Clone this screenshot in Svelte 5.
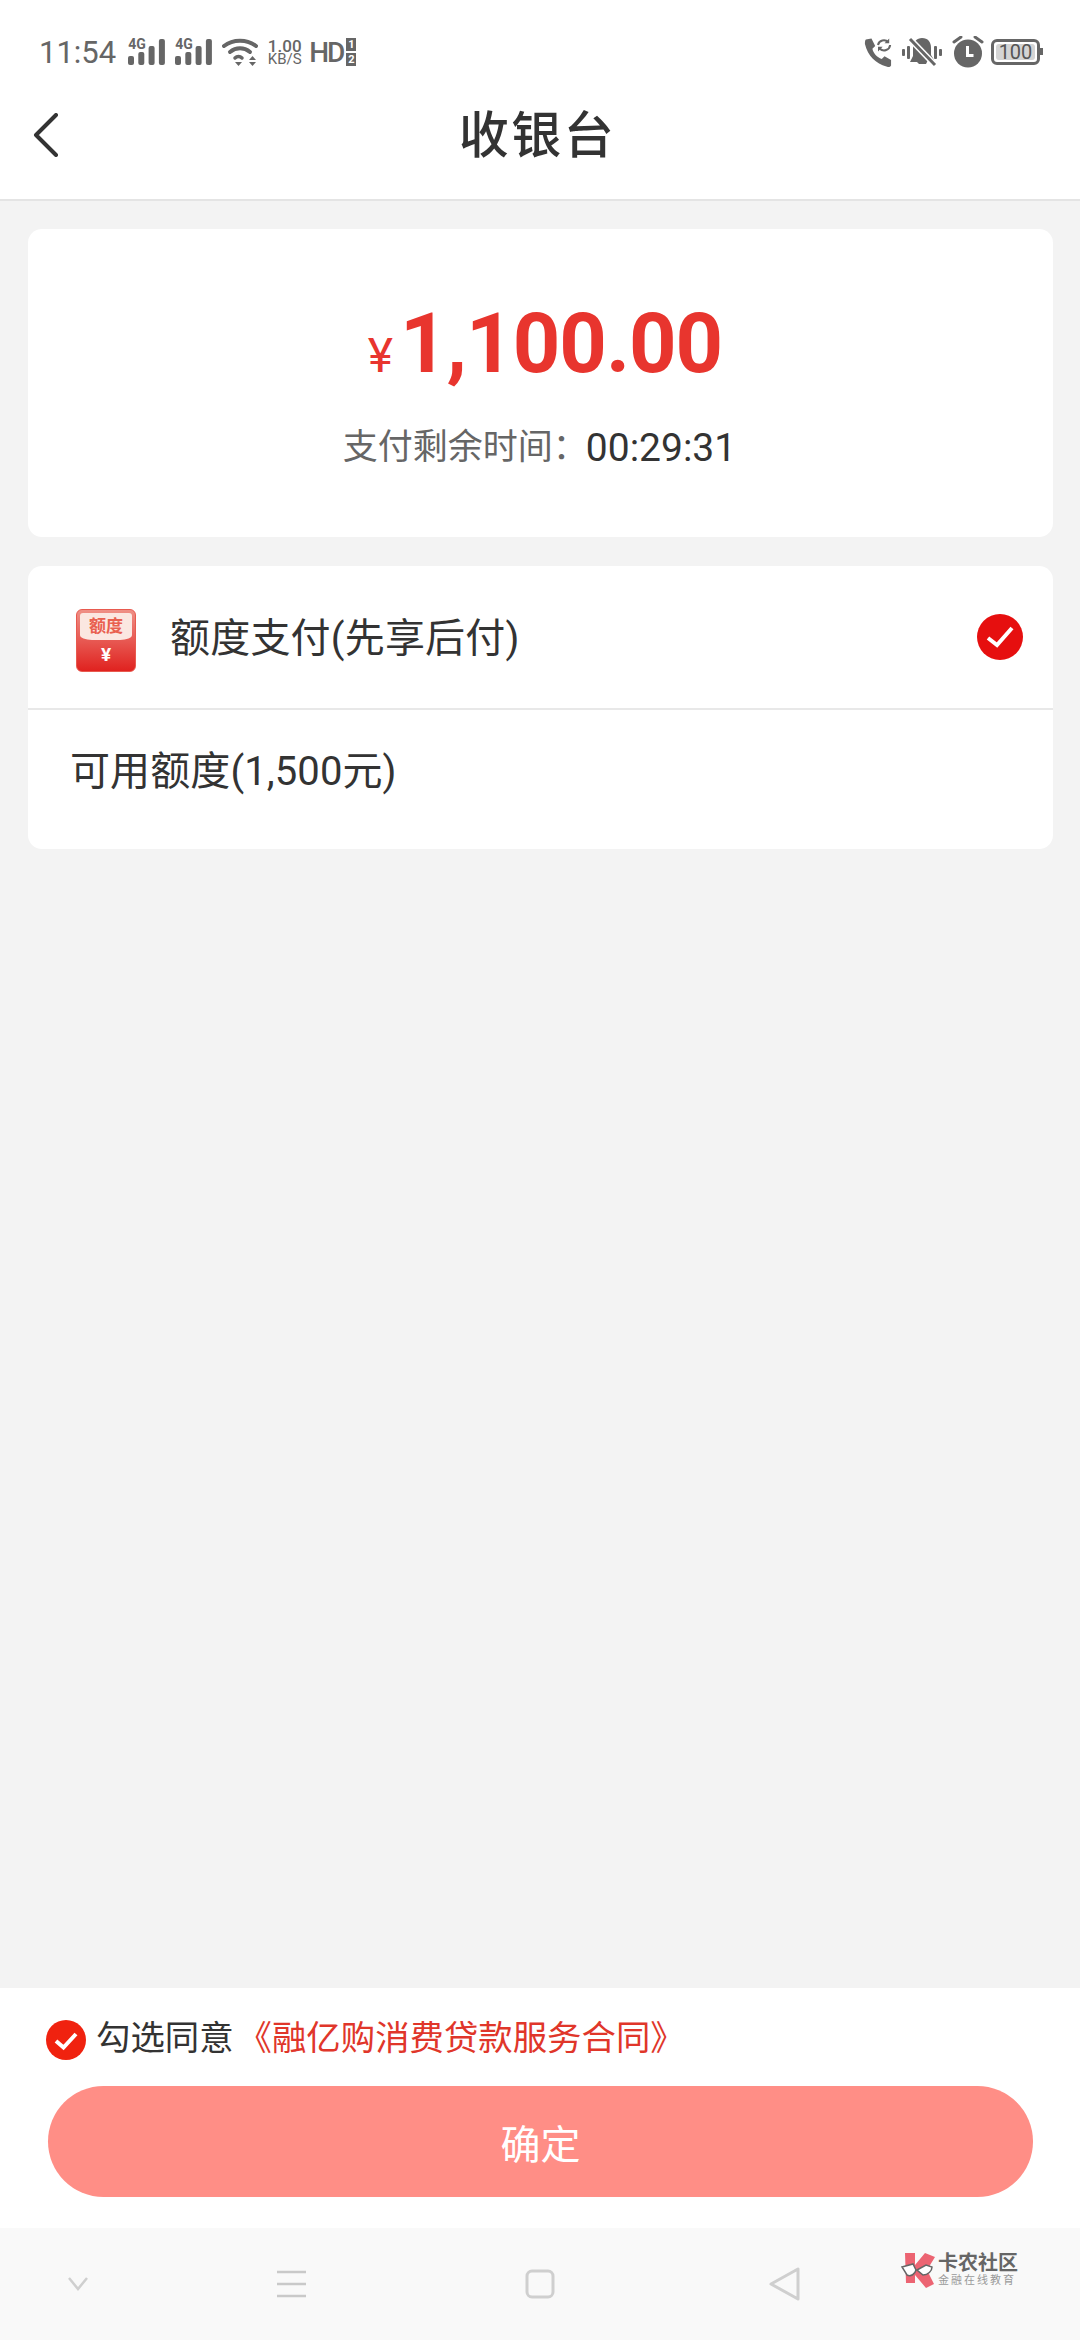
<script>
	const bars = [9, 13, 19, 26];
</script>

<div class="page">
	<div class="status">
		<div class="status-left">
			<span class="time">11:54</span>
			{#each [0, 1] as sim}
				<span class="signal" data-sim={sim}>
					<span class="net">4G</span>
					<svg width="37" height="26" viewBox="0 0 37 26" fill="#666">
						{#each bars as h, i}
							<rect x={i * 10.3} y={26 - h} width="6" height={h} rx="2" />
						{/each}
					</svg>
				</span>
			{/each}
			<svg class="wifi" width="36" height="29" viewBox="0 0 36 29" fill="none" stroke="#666">
				<path d="M2 8C11 1 25 1 34 8" stroke-width="4" stroke-linecap="round" />
				<path d="M8 14C14 9 22 9 28 14" stroke-width="4" stroke-linecap="round" />
				<path d="M13 20C15 18 18 18 20 20" stroke-width="3.5" stroke-linecap="round" />
				<path d="M13 24h7l-3.500 4z" fill="#666" stroke="none" />
				<path d="M27 22l3.500-4 3.500 4zM27 24h7l-3.500 4z" fill="#666" stroke="none" />
			</svg>
			<span class="speed"><b>1.00</b><i>KB/S</i></span>
			<span class="hd">HD</span>
			<span class="hd-sims"><b>1</b><b>2</b></span>
		</div>
		<div class="status-right">
			<svg width="28" height="30" viewBox="0 0 30 31" fill="#666">
				<path d="M2 2l6-1 4 8-3 3c1 5 5 9 10 11l3-3 7 4v6c-1 2-3 2-5 1C13 28 4 20 1 7c0-2 0-4 1-5z" />
				<path d="M15 8a6.500 6.500 0 0 1 11-3M28 8a6.500 6.500 0 0 1-11 4" fill="none" stroke="#666" stroke-width="2.200" />
				<path d="M27 1v5h-5zM15 15v-5h5z" />
			</svg>
			<svg width="40" height="30" viewBox="0 0 40 30" fill="#666">
				<path d="M20 1c6 0 9 4 9 10v7l3 5H26l-2 4h-7l-2-2H8l3-6v-8c0-6 4-10 9-10z" />
				<path d="M8 2l25 26" stroke="#fff" stroke-width="6" />
				<path d="M8 2l25 26" stroke="#666" stroke-width="3" />
				<rect x="0" y="12" width="3" height="7" rx="1" />
				<rect x="5" y="9" width="3" height="13" rx="1" />
				<rect x="32" y="9" width="3" height="13" rx="1" />
				<rect x="37" y="12" width="3" height="7" rx="1" />
			</svg>
			<svg width="32" height="32" viewBox="0 0 32 32">
				<circle cx="16" cy="17.500" r="14" fill="#666" />
				<path d="M15.500 10v9.500h6" fill="none" stroke="#fff" stroke-width="3" />
				<path d="M2 6l7-5M30 6l-7-5" stroke="#666" stroke-width="3" stroke-linecap="round" />
			</svg>
			<span class="battery"><span class="level">100</span></span>
		</div>
	</div>

	<header class="topbar">
		<svg class="back" width="26" height="44" viewBox="0 0 26 44" fill="none" stroke="#333" stroke-width="4" stroke-linecap="round" stroke-linejoin="round">
			<path d="M23 2L3 22l20 20" />
		</svg>
		<h1>收银台</h1>
	</header>

	<main class="content">
		<section class="card amount-card">
			<div class="amount"><span class="yen">¥</span><span class="num">1,100.00</span></div>
			<div class="remain"><span>支付剩余时间：</span><span class="clock">00:29:31</span></div>
		</section>

		<section class="card pay-card">
			<div class="pay-row">
				<div class="pay-icon">
					<span class="pay-top">额度</span>
					<span class="pay-yen">¥</span>
				</div>
				<span class="pay-label">额度支付(先享后付)</span>
				<svg class="pay-check" width="46" height="46" viewBox="0 0 46 46">
					<circle cx="23" cy="23" r="23" fill="#e60f0f" />
					<path d="M11 24l9 7 15-17" fill="none" stroke="#fff" stroke-width="4" />
				</svg>
			</div>
			<div class="limit-row">可用额度(1,500元)</div>
		</section>
	</main>

	<footer class="bottom">
		<div class="agree">
			<svg class="agree-check" width="40" height="40" viewBox="0 0 40 40">
				<circle cx="20" cy="20" r="20" fill="#f0220f" />
				<path d="M10 21l7.500 6.500L30 14" fill="none" stroke="#fff" stroke-width="4" />
			</svg>
			<span class="agree-text">勾选同意</span>
			<span class="contract">《融亿购消费贷款服务合同》</span>
		</div>
		<button class="confirm">确定</button>
	</footer>

	<nav class="navbar">
		<svg class="nav-down" width="20" height="14" viewBox="0 0 20 14" fill="none" stroke="#cfcfcf" stroke-width="2.500"><path d="M1 1l9 11 9-11" /></svg>
		<svg class="nav-menu" width="31" height="28" viewBox="0 0 31 28" fill="none" stroke="#c9c9c9" stroke-width="2.500"><path d="M1 2h29M1 14h29M1 26h29" /></svg>
		<svg class="nav-home" width="30" height="30" viewBox="0 0 30 30" fill="none" stroke="#cfcfcf" stroke-width="3"><rect x="2" y="2" width="26" height="26" rx="5" /></svg>
		<svg class="nav-back" width="32" height="34" viewBox="0 0 32 34" fill="none" stroke="#cfcfcf" stroke-width="3" stroke-linejoin="round"><path d="M29 2v30L2 17z" /></svg>
		<div class="watermark">
			<svg width="36" height="36" viewBox="0 0 34 36">
				<path d="M4 1h10v12L24 1l10 4-8 13 7 14-8 4-11-13v8H5z" fill="#ec6472" />
				<path d="M1 15l11-3 3 6c-1 4-5 7-9 5zM16 18l9-5 6 2c0 4-4 8-9 8z" fill="#fff" stroke="#666" stroke-width="1.500" />
			</svg>
			<div class="wm-text">
				<span class="wm-name">卡农社区</span>
				<span class="wm-sub">金融在线教育</span>
			</div>
		</div>
	</nav>
</div>

<style>
	:global(body) {
		margin: 0;
		background: #f3f3f3;
	}

	.page {
		width: 1080px;
		height: 2340px;
		display: flex;
		flex-direction: column;
		background: #f3f3f3;
		font-family: Roboto, "Noto Sans CJK SC", sans-serif;
		color: #333;
	}

	.status {
		height: 70px;
		flex-shrink: 0;
		background: #fff;
		display: flex;
		justify-content: space-between;
		align-items: center;
		padding: 34px 40px 0 39px;
		box-sizing: border-box;
	}

	.status-left,
	.status-right {
		display: flex;
		align-items: center;
		color: #666;
	}

	.status-right {
		gap: 10px;
	}

	.time {
		font-size: 31px;
		margin-right: 12px;
	}

	.signal {
		position: relative;
		width: 37px;
		height: 26px;
		margin-right: 10px;
	}

	.signal svg {
		display: block;
	}

	.net {
		position: absolute;
		left: 0;
		top: 0;
		font-size: 14px;
		font-weight: 700;
		line-height: 11px;
	}

	.wifi {
		margin-right: 9px;
	}

	.speed {
		display: flex;
		flex-direction: column;
		align-items: center;
		width: 35px;
		margin-right: 7px;
	}

	.speed b {
		font-size: 17px;
		font-weight: 500;
		line-height: 14px;
	}

	.speed i {
		font-size: 15px;
		font-style: normal;
		line-height: 12px;
	}

	.hd {
		font-size: 28px;
		font-weight: 500;
		letter-spacing: -2px;
	}

	.hd-sims {
		display: flex;
		flex-direction: column;
		gap: 2px;
		margin-left: 3px;
	}

	.hd-sims b {
		width: 10px;
		height: 13px;
		background: #666;
		color: #fff;
		font-size: 11px;
		line-height: 13px;
		text-align: center;
	}

	.battery {
		width: 49px;
		height: 26px;
		box-sizing: border-box;
		border: 3px solid #666;
		border-radius: 6px;
		padding: 2px;
		position: relative;
		display: block;
		margin-left: -3px;
	}

	.battery::after {
		content: "";
		position: absolute;
		right: -6px;
		top: 6px;
		width: 3px;
		height: 7px;
		background: #666;
	}

	.level {
		display: block;
		height: 100%;
		background: #d4d4d4;
		border-radius: 3px;
		font-size: 20px;
		line-height: 16px;
		text-align: center;
		color: #555;
	}

	.topbar {
		height: 129px;
		flex-shrink: 0;
		background: #fff;
		border-bottom: 2px solid #e4e4e4;
		display: flex;
		align-items: center;
		justify-content: center;
		position: relative;
		margin-bottom: 28px;
	}

	.back {
		position: absolute;
		left: 33px;
		top: 50%;
		margin-top: -22px;
	}

	h1 {
		margin: 0 0 7px -5px;
		font-size: 50px;
		font-weight: 500;
		color: #333;
		letter-spacing: 2.5px;
	}

	.content {
		flex: 1;
		padding: 0 27px 0 28px;
		display: flex;
		flex-direction: column;
		gap: 29px;
	}

	.card {
		background: #fff;
		border-radius: 14px;
	}

	.amount-card {
		height: 308px;
		display: flex;
		flex-direction: column;
		align-items: center;
		padding-top: 70px;
		box-sizing: border-box;
	}

	.amount {
		display: flex;
		align-items: baseline;
		color: #e8352e;
		line-height: 90px;
		margin-left: 9px;
	}

	.yen {
		font-size: 48px;
		margin-right: 7px;
	}

	.num {
		font-size: 83px;
		font-weight: 700;
		letter-spacing: -1px;
	}

	.remain {
		display: flex;
		align-items: center;
		margin-top: 20px;
		font-size: 35px;
		color: #666;
		line-height: 54px;
		margin-left: -2px;
	}

	.clock {
		font-size: 39px;
		color: #333;
		margin-left: -2px;
	}

	.pay-card {
		height: 283px;
		display: flex;
		flex-direction: column;
	}

	.pay-row {
		height: 142px;
		flex-shrink: 0;
		display: flex;
		align-items: center;
		padding: 0 30px 0 48px;
		border-bottom: 2px solid #e8e8e8;
	}

	.pay-icon {
		width: 58px;
		height: 61px;
		border-radius: 6px;
		background: linear-gradient(#ef9086, #e0221f);
		display: flex;
		flex-direction: column;
		align-items: center;
		overflow: hidden;
		border: 1px solid #e85a4f;
		margin-top: 6px;
	}

	.pay-top {
		width: 52px;
		height: 27px;
		margin-top: 3px;
		background: #fbe7e1;
		border-radius: 3px 3px 12px 12px / 3px 3px 5px 5px;
		color: #e9604f;
		font-size: 17px;
		font-weight: 700;
		line-height: 27px;
		text-align: center;
	}

	.pay-yen {
		color: #fff;
		font-size: 19px;
		font-weight: 700;
		line-height: 30px;
	}

	.pay-label {
		margin-left: 34px;
		margin-bottom: 5px;
		flex: 1;
		font-size: 40px;
		letter-spacing: 0.2px;
	}

	.limit-row {
		padding: 0 0 0 42px;
		font-size: 40px;
		letter-spacing: 0.1px;
		line-height: 124px;
		height: 139px;
	}

	.bottom {
		height: 240px;
		flex-shrink: 0;
		background: #fff;
		padding: 0 47px 0 46px;
		box-sizing: border-box;
	}

	.agree {
		height: 98px;
		display: flex;
		align-items: center;
		font-size: 34.400px;
	}

	.agree-check {
		margin-top: 6px;
	}

	.agree-text {
		margin-left: 10px;
		margin-bottom: 4px;
	}

	.contract {
		color: #e0362a;
		margin-left: 4px;
		margin-bottom: 4px;
	}

	.confirm {
		display: block;
		width: 985px;
		height: 111px;
		margin-left: 2px;
		border: 0;
		border-radius: 56px;
		background: #ff8e86;
		color: #fff;
		font-family: inherit;
		font-size: 40px;
	}

	.navbar {
		height: 112px;
		flex-shrink: 0;
		background: #f9f9f9;
		display: flex;
		align-items: center;
		position: relative;
	}

	.nav-down {
		margin-left: 68px;
	}

	.nav-menu {
		margin-left: 188px;
	}

	.nav-home {
		margin-left: 218px;
	}

	.nav-back {
		margin-left: 214px;
	}

	.watermark {
		position: absolute;
		left: 900px;
		top: 24px;
		display: flex;
		align-items: center;
		gap: 2px;
	}

	.wm-text {
		display: flex;
		flex-direction: column;
		color: #666;
	}

	.wm-name {
		font-size: 20px;
		line-height: 22px;
		font-weight: 700;
	}

	.wm-sub {
		font-size: 11px;
		line-height: 14px;
		letter-spacing: 2px;
		color: #999;
	}
</style>
